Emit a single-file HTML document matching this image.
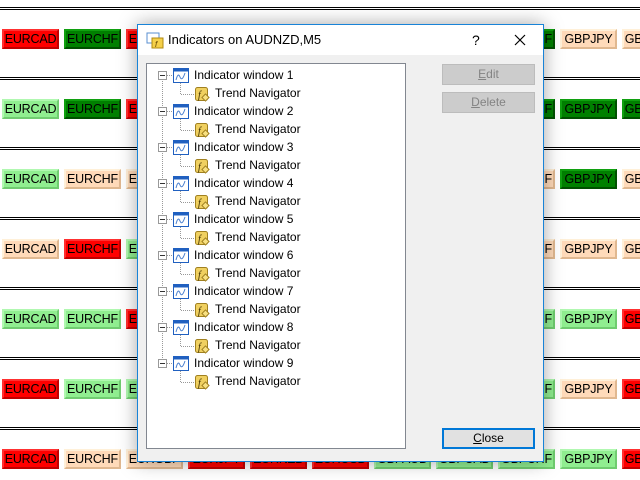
<!DOCTYPE html>
<html><head><style>
html,body{margin:0;width:640px;height:480px;overflow:hidden}
body{background:#fff;position:relative;font-family:"Liberation Sans",Arial,sans-serif}
#bg{position:absolute;left:0;top:0;width:640px;height:480px;overflow:hidden}
.ln{position:absolute;left:0;width:640px;height:1px;background:#000}
.b{position:absolute;width:53px;height:16px;border:2px solid;font-size:12.5px;line-height:16px;text-align:center;color:#000;white-space:nowrap;letter-spacing:-0.2px}
.R{background:#f00;border-color:#ff3030 #c00000 #c00000 #ff3030}
.D{background:#008000;border-color:#10a010 #005000 #005000 #10a010}
.L{background:#90ee90;border-color:#b0f8b0 #70cc70 #70cc70 #b0f8b0}
.P{background:#ffdab9;border-color:#fff0d8 #e0b890 #e0b890 #fff0d8}
#dlg{position:absolute;left:137px;top:24px;width:405px;height:436px;background:#f0f0f0;border:1px solid #1883d7;box-shadow:0 0 18px rgba(0,0,0,.35)}
#tt{height:30px;background:#fff;font-size:13px;line-height:30px;position:relative}
#tree{position:absolute;left:8px;top:38px;width:258px;height:384px;background:#fff;border:1px solid #828790}
.btn{position:absolute;left:304px;width:91px;height:19px;border:1px solid #bcbcbc;background:#ccc;color:#838383;font-size:12px;line-height:19px;text-align:center}
.it{position:absolute;font-size:12px;line-height:16px;color:#000}
</style></head><body>
<div id="bg"></div>
<div id="dlg">
<div id="tt">
<svg style="position:absolute;left:8px;top:7px" width="18" height="17"><rect x="1" y="1" width="12" height="10" fill="#fff" stroke="#5a8fd0"/><rect x="6" y="6" width="11" height="10" fill="#f5d04a" stroke="#b08a10"/><text x="9" y="15" font-size="8" font-style="italic" fill="#604000">f</text></svg>
<span style="position:absolute;left:30px">Indicators on AUDNZD,M5</span>
<span style="position:absolute;left:334px;font-size:14px">?</span>
<svg style="position:absolute;left:376px;top:9px" width="12" height="12"><path d="M1 1L11 11M11 1L1 11" stroke="#000" stroke-width="1.2"/></svg>
</div>
<div id="tree"></div>
<div class="btn" style="top:39px"><u>E</u>dit</div>
<div class="btn" style="top:67px"><u>D</u>elete</div>
<div class="btn" style="top:403px;border:2px solid #0078d7;height:17px;line-height:17px;color:#000;background:#e1e1e1;width:89px"><u>C</u>lose</div>
</div>
<script>
var cols=[["R","D","R",0,0,0,0,0,"D","P","P"],["L","D","R",0,0,0,0,0,"D","D","D"],["L","P","P",0,0,0,0,0,"P","D","P"],["P","R","L",0,0,0,0,0,"P","P","P"],["L","L","R",0,0,0,0,0,"L","L","R"],["R","L","L",0,0,0,0,0,"L","P","R"],["R","P","P","R","R","R","L","L","L","L","R"]];
var names=["EURCAD","EURCHF","EURGBP","EURJPY","EURNZD","EURUSD","GBPAUD","GBPCAD","GBPCHF","GBPJPY","GBPUSD"];
var h="";
for(var k=0;k<7;k++){h+='<div class="ln" style="top:'+(7+70*k)+'px"></div><div class="ln" style="top:'+(9+70*k)+'px"></div>';
for(var c=0;c<11;c++){var cl=cols[k][c]||"L";h+='<div class="b '+cl+'" style="left:'+(2+62*c)+'px;top:'+(29+70*k)+'px">'+names[c]+'</div>';}}
document.getElementById("bg").innerHTML=h;
var t='<svg style="position:absolute;left:0;top:0" width="258" height="384">';
t+='<line x1="15.5" y1="15" x2="15.5" y2="303" stroke="#999" stroke-dasharray="1,1"/>';
for(var i=0;i<9;i++){var y=12+36*i;
t+='<rect x="11.5" y="'+(y-4.5)+'" width="8" height="8" fill="#fff" stroke="#999"/><line x1="13" y1="'+(y-0.5)+'" x2="18" y2="'+(y-0.5)+'" stroke="#333"/>';
t+='<line x1="20" y1="'+(y-0.5)+'" x2="26" y2="'+(y-0.5)+'" stroke="#999" stroke-dasharray="1,1"/>';
t+='<rect x="26.5" y="'+(y-7.5)+'" width="15" height="14" fill="#fff" stroke="#2060c0"/><rect x="26.5" y="'+(y-7.5)+'" width="15" height="3" fill="#2060c0"/>';
t+='<path d="M29 '+(y+4)+'Q31 '+(y-4)+' 33 '+(y+1)+'T38 '+(y-3)+'" fill="none" stroke="#4a80d0"/>';
t+='<line x1="33.5" y1="'+(y+7)+'" x2="33.5" y2="'+(y+18.5)+'" stroke="#999" stroke-dasharray="1,1"/><line x1="34" y1="'+(y+18.5)+'" x2="47" y2="'+(y+18.5)+'" stroke="#999" stroke-dasharray="1,1"/>';
t+='<rect x="48.5" y="'+(y+11.5)+'" width="12" height="13" rx="2" fill="#f0d060" stroke="#a08020"/><text x="51" y="'+(y+22)+'" font-size="10" font-style="italic" fill="#403000" font-family="Liberation Serif">f</text><rect x="56" y="'+(y+19)+'" width="5" height="5" transform="rotate(45 58.5 '+(y+21.5)+')" fill="#f8e080" stroke="#a08020"/>';
}
t+='</svg>';
for(var i=0;i<9;i++){var y=12+36*i;
t+='<div class="it" style="left:47px;top:'+(y-9)+'px">Indicator window '+(i+1)+'</div><div class="it" style="left:68px;top:'+(y+9)+'px">Trend Navigator</div>';}
document.getElementById("tree").innerHTML=t;
</script>
</body></html>
